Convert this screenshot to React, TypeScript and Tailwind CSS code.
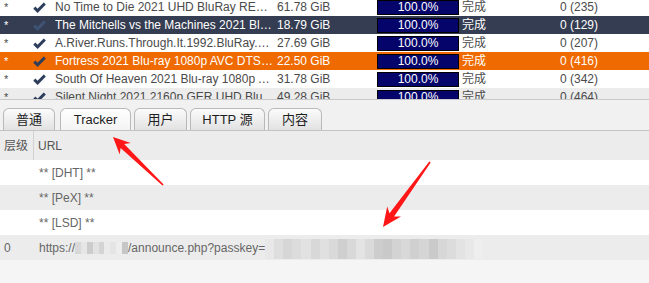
import React from "react";

type Row = { name: string; size: string; seeds: string; kind: "w" | "dark" | "orange" | "gray" };

const rows: Row[] = [
  { name: "No Time to Die 2021 UHD BluRay REMUX 2160p", size: "61.78 GiB", seeds: "0 (235)", kind: "w" },
  { name: "The Mitchells vs the Machines 2021 BluRay 1080p", size: "18.79 GiB", seeds: "0 (129)", kind: "dark" },
  { name: "A.River.Runs.Through.It.1992.BluRay.1080p", size: "27.69 GiB", seeds: "0 (207)", kind: "w" },
  { name: "Fortress 2021 Blu-ray 1080p AVC DTS-HD MA", size: "22.50 GiB", seeds: "0 (416)", kind: "orange" },
  { name: "South Of Heaven 2021 Blu-ray 1080p AVC", size: "31.78 GiB", seeds: "0 (342)", kind: "w" },
  { name: "Silent Night 2021 2160p GER UHD BluRay", size: "49.28 GiB", seeds: "0 (464)", kind: "gray" },
];

function Check({ color }: { color: string }) {
  return (
    <svg width="13" height="11" viewBox="0 0 13 11">
      <path d="M1.3 5.6 L4.6 8.8 L11.8 1.5" fill="none" stroke={color} strokeWidth="3" strokeLinejoin="miter" />
    </svg>
  );
}

function arrowPts(tx: number, ty: number, sx: number, sy: number, headLen: number, headHalf: number, shaftHead: number, shaftTail: number) {
  const dx = tx - sx;
  const dy = ty - sy;
  const len = Math.hypot(dx, dy);
  const ux = dx / len;
  const uy = dy / len;
  const nx = -uy;
  const ny = ux;
  const bx = tx - ux * headLen;
  const by = ty - uy * headLen;
  const jx = tx - ux * (headLen - 4);
  const jy = ty - uy * (headLen - 4);
  const p = [
    [tx, ty],
    [bx + nx * headHalf, by + ny * headHalf],
    [jx + nx * shaftHead, jy + ny * shaftHead],
    [sx + nx * shaftTail, sy + ny * shaftTail],
    [sx - nx * shaftTail, sy - ny * shaftTail],
    [jx - nx * shaftHead, jy - ny * shaftHead],
    [bx - nx * headHalf, by - ny * headHalf],
  ];
  return p.map((q) => q[0].toFixed(1) + "," + q[1].toFixed(1)).join(" ");
}

const mosaic = [
  "#e8e8e8", "#dedede", "#d6d6d6", "#dcdcdc", "#e2e2e2", "#d8d8d8", "#e0e0e0", "#d9d9d9", "#cfcfcf", "#d8d8d8",
  "#e3e3e3", "#dadada", "#cdcdcd", "#c9c9c9", "#d3d3d3", "#d8d8d8", "#d0d0d0", "#d5d5d5", "#cacaca", "#d7d7d7",
  "#dcdcdc", "#e3e3e3", "#e8e8e8", "#eeeeee",
];

const dom = ["#d8d8d8", "#e6e6e6", "#cccccc", "#e2e2e2", "#d4d4d4", "#eaeaea", "#e4e4e4", "#ededed", "#c6c6c6"];

const tabs = [
  { t: "普通", w: "w-[52px]", m: "", a: false },
  { t: "Tracker", w: "w-[71px]", m: "ml-[5px]", a: true },
  { t: "用户", w: "w-[53px]", m: "ml-[3px]", a: false },
  { t: "HTTP 源", w: "w-[75px]", m: "ml-[3px]", a: false },
  { t: "内容", w: "w-[54px]", m: "ml-[3px]", a: false },
];

export default function App() {
  return (
    <div className="relative w-[649px] h-[283px] overflow-hidden bg-white font-['Liberation_Sans','Noto_Sans_CJK_SC',sans-serif]">
      {/* torrent list */}
      <div className="h-[99px] overflow-hidden">
        <div className="mt-[-2px]">
          {rows.map((r, i) => {
            const bg =
              r.kind === "dark"
                ? "bg-[#353d52] text-white"
                : r.kind === "orange"
                ? "bg-[#ef6a00] text-white"
                : r.kind === "gray"
                ? "bg-[#ececec] text-[#4a4a4a]"
                : "bg-white text-[#4a4a4a]";
            const checkColor = r.kind === "dark" ? "#3f5375" : "#2d3d5c";
            return (
              <div key={i} className={"flex items-center h-[18px] text-[12px] leading-[18px] " + bg}>
                <div className="w-[28px] pl-[4px] text-[11px]">*</div>
                <div className="w-[27px] pl-[5px] flex items-center">
                  <Check color={checkColor} />
                </div>
                <div className="w-[220px] truncate">{r.name}</div>
                <div className="w-[102px] pl-[2px]">{r.size}</div>
                <div className="w-[82px] h-[15px] bg-[#04046a] border border-black text-white text-[12px] leading-[13px] text-center">100.0%</div>
                <div className="w-[101px] pl-[3px]">完成</div>
                <div>{r.seeds}</div>
              </div>
            );
          })}
        </div>
      </div>
      <div className="h-px bg-[#c9c9c9]" />
      {/* tabs */}
      <div className="bg-[#f1f1f1] pt-[7px] pl-[3px] flex items-end border-b border-[#c4c4c4] h-[31px]">
        {tabs.map((tab) => (
          <div
            key={tab.t}
            className={
              "h-[22px] flex items-center justify-center rounded-t-[6px] border border-b-0 border-[#b9b9b9] text-[13px] text-[#1e1e1e] " +
              tab.w +
              " " +
              tab.m +
              (tab.a ? " bg-gradient-to-b from-[#ffffff] to-[#f3f3f3]" : " bg-gradient-to-b from-[#fbfbfb] to-[#e2e2e2]")
            }
          >
            {tab.t}
          </div>
        ))}
      </div>
      {/* header */}
      <div className="flex h-[29px] bg-[#ececec] text-[12px] text-[#555] items-stretch">
        <div className="w-[34px] pl-[4px] flex items-center border-r border-[#d2d2d2]">层级</div>
        <div className="pl-[4px] flex items-center">URL</div>
      </div>
      {/* tracker rows */}
      <div className="text-[12px] text-[#666]">
        <div className="flex h-[25px] items-center bg-white">
          <div className="w-[39px] pl-[4px]"></div>
          <div>** [DHT] **</div>
        </div>
        <div className="flex h-[25px] items-center bg-[#ececec]">
          <div className="w-[39px] pl-[4px]"></div>
          <div>** [PeX] **</div>
        </div>
        <div className="flex h-[25px] items-center bg-white">
          <div className="w-[39px] pl-[4px]"></div>
          <div>** [LSD] **</div>
        </div>
        <div className="flex h-[25px] items-center bg-[#ececec]">
          <div className="w-[39px] pl-[4px]">0</div>
          <div className="flex items-center">
            <span>https://</span>
            <span className="flex h-[12px] w-[53px]">
              {dom.map((c, i) => (
                <span key={i} className="h-full flex-1" style={{ backgroundColor: c }} />
              ))}
            </span>
            <span>/announce.php?passkey=</span>
            <span className="flex h-[20px] mt-[3px] w-[218px]">
              {mosaic.map((c, i) => (
                <span key={i} className="h-full flex-1" style={{ backgroundColor: c }} />
              ))}
            </span>
          </div>
        </div>
      </div>
      <div className="h-[30px] bg-[#f5f5f5]" />
      {/* arrows overlay */}
      <svg className="absolute left-0 top-0 pointer-events-none" width="649" height="283">
        <polygon points={arrowPts(113, 137, 163, 185, 17, 8, 2.6, 0.8)} fill="#ff1717" />
        <polygon points={arrowPts(383, 227, 430, 162, 19, 8.5, 2.8, 0.9)} fill="#ff1717" />
      </svg>
    </div>
  );
}
